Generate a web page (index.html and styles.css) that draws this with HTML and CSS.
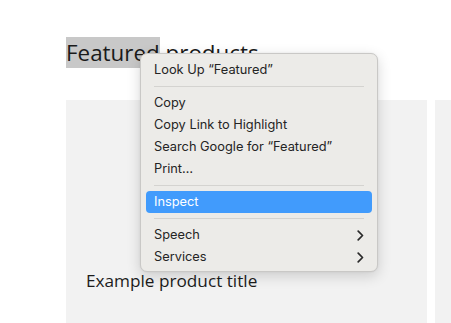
FILE: index.html
```html
<!DOCTYPE html>
<html>
<head>
<meta charset="utf-8">
<link rel="stylesheet" href="styles.css">
</head>
<body>
<main class="page">
  <h2 class="heading"><span class="sel">Featured</span> products</h2>
  <div class="grid">
    <div class="card"><p class="title">Example product title</p></div>
    <div class="card"></div>
  </div>
</main>
<div class="menu">
  <div class="item">Look Up “Featured”</div>
  <div class="sep"></div>
  <div class="item">Copy</div>
  <div class="item">Copy Link to Highlight</div>
  <div class="item">Search Google for “Featured”</div>
  <div class="item">Print…</div>
  <div class="sep"></div>
  <div class="item active">Inspect</div>
  <div class="sep"></div>
  <div class="item sub">Speech<svg class="chev" width="7" height="11" viewBox="0 0 7 11"><path d="M1.2 1.2 L5.5 5.5 L1.2 9.8" fill="none" stroke="#2a2a2a" stroke-width="1.7" stroke-linecap="round" stroke-linejoin="round"/></svg></div>
  <div class="item sub">Services<svg class="chev" width="7" height="11" viewBox="0 0 7 11"><path d="M1.2 1.2 L5.5 5.5 L1.2 9.8" fill="none" stroke="#2a2a2a" stroke-width="1.7" stroke-linecap="round" stroke-linejoin="round"/></svg></div>
</div>
</body>
</html>
```

FILE: styles.css
```css
html, body {
  margin: 0;
  padding: 0;
  background: #ffffff;
}
body {
  width: 451px;
  height: 323px;
  overflow: hidden;
  position: relative;
  font-family: "Open Sans", sans-serif;
  color: #1c1c1c;
}
.page {
  padding: 37px 0 0 66px;
}
.heading {
  margin: 0;
  font-weight: 400;
  font-size: 22.4px;
  line-height: 31px;
  height: 31px;
  color: #1a1a1a;
}
.sel {
  background: #c8c8c8;
}
.grid {
  display: grid;
  grid-template-columns: 361px 361px;
  gap: 8px;
  margin-top: 32px;
  width: 385px;
  overflow: hidden;
}
.card {
  background: #f2f2f2;
  height: 223px;
  display: flex;
  flex-direction: column;
  justify-content: flex-end;
}
.title {
  margin: 0 0 30px 20px;
  font-size: 17.2px;
  line-height: 24px;
  color: #1c1c1c;
}
.menu {
  position: absolute;
  left: 140px;
  top: 53px;
  width: 238px;
  box-sizing: border-box;
  padding: 5px 5px 3px;
  background: #ecebe8;
  border: 1px solid #c9c8c6;
  border-radius: 7px;
  box-shadow: 0 4px 14px rgba(0,0,0,0.16), 0 0 2px rgba(0,0,0,0.08);
  font-family: "Inter", "Liberation Sans", sans-serif;
  font-size: 12.8px;
  color: #242424;
}
.item {
  height: 22px;
  line-height: 22px;
  padding: 0 8px;
  border-radius: 4px;
  display: flex;
  align-items: center;
  justify-content: space-between;
}
.item.active {
  background: #419bfc;
  color: #ffffff;
}
.sep {
  height: 1px;
  background: #d4d3d0;
  margin: 5px 8px;
}
.chev {
  margin-right: 0;
}
```
